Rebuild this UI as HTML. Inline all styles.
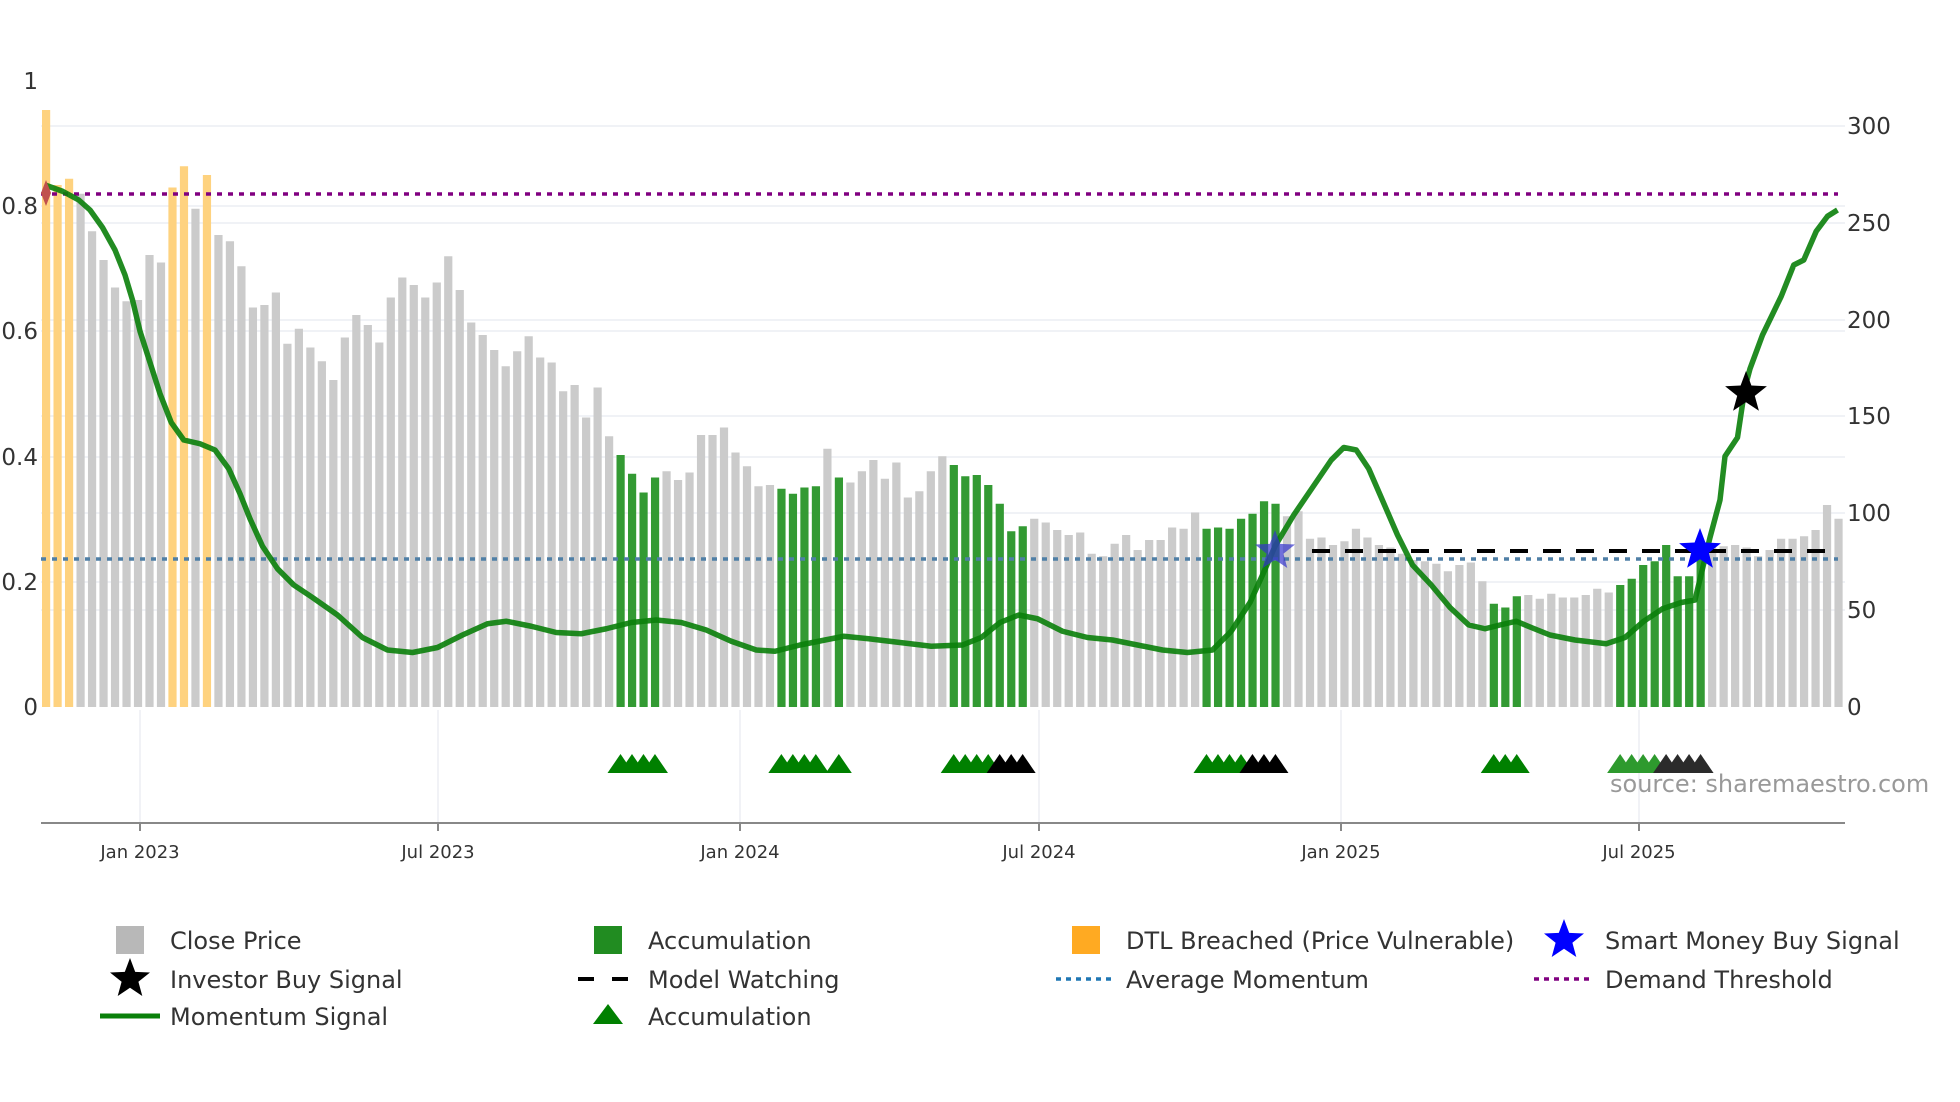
<!DOCTYPE html>
<html><head><meta charset="utf-8"><style>
html,body{margin:0;padding:0;background:#fff;width:1960px;height:1102px;overflow:hidden}
svg text{font-family:"DejaVu Sans","Liberation Sans",sans-serif}
</style></head><body>
<svg id="s" width="1960" height="1102" viewBox="0 0 1960 1102" xmlns="http://www.w3.org/2000/svg">
<g id="grid" stroke="#eceef3" stroke-width="1.5"></g>
<g id="bars"></g>
<g id="lines"></g>
<g id="tri"></g>
<g id="ax"></g>
<g id="leg"></g>
</svg>
<script>
var NS="http://www.w3.org/2000/svg";
function el(p,t,a,txt){var e=document.createElementNS(NS,t);for(var k in a)e.setAttribute(k,a[k]);if(txt!==undefined)e.textContent=txt;document.getElementById(p).appendChild(e);return e;}
var tops=[88,148,143,155,185,208,230,241,240,204,210,150,133,167,140,188,193,213,246,244,234,275,263,278,289,304,270,252,260,274,238,222,228,238,226,205,232,258,268,280,293,281,269,286,290,313,308,334,310,349,364,379,394,382,377,384,378,348,348,342,362,373,389,388,391,395,390,389,359,382,386,377,368,383,370,398,393,377,365,372,381,380,388,403,425,421,415,418,424,428,426,443,445,435,428,440,432,432,422,423,410,423,422,423,415,411,401,403,413,409,431,430,436,433,423,430,436,438,443,448,449,451,457,452,450,465,483,486,477,476,479,475,478,478,476,471,474,468,463,452,449,436,461,461,436,438,437,436,438,445,440,431,431,429,424,404,415];
var orange=[0,1,2,11,12,14];
var greens=[50,51,52,53,64,65,66,67,69,79,80,81,82,83,84,85,101,102,103,104,105,106,107,126,127,128,137,138,139,140,141,142,143,144];
function bx(i){return 46+i*11.49;}
[582,457,331,206,610,513,416,320,223,126].forEach(function(y){el('grid','line',{x1:41,x2:1845,y1:y,y2:y});});
[140,438,740,1039,1341,1639].forEach(function(x){el('grid','line',{x1:x,x2:x,y1:710,y2:823});});
tops.forEach(function(t,i){var y=t*1.25;var c='#cbcbcb';if(orange.indexOf(i)>=0)c='#fed27f';else if(greens.indexOf(i)>=0)c='#339a33';
el('bars','rect',{x:bx(i)-4,y:y,width:8.2,height:707-y,fill:c});});
el('lines','line',{x1:41,x2:1838,y1:194,y2:194,stroke:'#800080','stroke-width':3.5,'stroke-dasharray':'5 6'});
el('lines','line',{x1:41,x2:1838,y1:559,y2:559,stroke:'#4f7fa6','stroke-width':3.5,'stroke-dasharray':'5 6'});
el('lines','line',{x1:1312,x2:1834,y1:551,y2:551,stroke:'#000','stroke-width':4,'stroke-dasharray':'18 15'});
var pts=[[36,148],[50,153],[63,160],[72,168],[82,182],[92,200],[100,220],[106,240],[112,265],[120,290],[128,315],[137,338],[147,352],[160,355],[172,360],[183,375],[192,395],[200,415],[210,437],[222,455],[235,468],[250,478],[270,492],[290,510],[310,520],[330,522],[350,518],[370,508],[390,499],[405,497],[425,501],[445,506],[465,507],[485,503],[505,498],[525,496],[545,498],[565,504],[585,513],[605,520],[620,521],[640,516],[660,512],[675,509],[695,511],[720,514],[745,517],[770,516],[785,510],[800,498],[815,492],[830,495],[850,505],[870,510],[890,512],[910,516],[930,520],[950,522],[970,520],[985,505],[1000,482],[1010,460],[1020,437],[1035,412],[1050,390],[1065,368],[1075,358],[1085,360],[1095,375],[1105,398],[1118,428],[1130,452],[1145,468],[1160,486],[1175,500],[1188,503],[1200,500],[1213,497],[1225,502],[1240,508],[1260,512],[1285,515],[1300,510],[1315,497],[1330,487],[1345,482],[1356,480],[1362,455],[1368,430],[1376,400],[1380,365],[1390,350],[1396,310],[1400,295],[1410,268],[1425,237],[1435,212],[1443,208],[1453,185],[1462,173],[1470,168]];
el('lines','polyline',{points:pts.map(function(p){return (p[0]*1.25)+','+(p[1]*1.25);}).join(' '),fill:'none',stroke:'#0a800a','stroke-width':5.5,'stroke-linejoin':'round','stroke-opacity':0.9});
el('lines','path',{d:'M46,180 L51,193 L46,206 L41,193Z',fill:'#c0504d'});
function star(cx,cy,r,fill,op,g){var d='';for(var k=0;k<10;k++){var a=-Math.PI/2+k*Math.PI/5;var rr=k%2?r*0.42:r;d+=(k?'L':'M')+(cx+rr*Math.cos(a)).toFixed(1)+','+(cy+rr*Math.sin(a)).toFixed(1);}el(g||'lines','path',{d:d+'Z',fill:fill,'fill-opacity':op});}
star(1275,551,21,'#3333cc',0.7);
star(1700,550,22,'#0000ff',1);
star(1746,393,22,'#000',1);
function tri(i,c,op){var x=bx(i);el('tri','path',{d:'M'+(x-13)+',773 L'+x+',754 L'+(x+13)+',773Z',fill:c,'fill-opacity':op});}
[50,51,52,53,64,65,66,67,69,79,80,81,82,101,102,103,104,126,127,128].forEach(function(i){tri(i,'#008000',1);});
[83,84,85,105,106,107].forEach(function(i){tri(i,'#000',1);});
[137,138,139,140].forEach(function(i){tri(i,'#2e9a2e',1);});
[141,142,143,144].forEach(function(i){tri(i,'#2b2b2b',1);});
el('ax','line',{x1:41,x2:1845,y1:823,y2:823,stroke:'#888','stroke-width':2});
var dl=[[140,'Jan 2023'],[438,'Jul 2023'],[740,'Jan 2024'],[1039,'Jul 2024'],[1341,'Jan 2025'],[1639,'Jul 2025']];
dl.forEach(function(d){el('ax','line',{x1:d[0],x2:d[0],y1:823,y2:831,stroke:'#888','stroke-width':2});el('ax','text',{x:d[0],y:858,'text-anchor':'middle','font-size':18,fill:'#333'},d[1]);});
[[81,'1'],[206,'0.8'],[331,'0.6'],[457,'0.4'],[582,'0.2'],[707,'0']].forEach(function(d){el('ax','text',{x:38,y:d[0]+8,'text-anchor':'end','font-size':23,fill:'#333'},d[1]);});
[[126,'300'],[223,'250'],[320,'200'],[416,'150'],[513,'100'],[610,'50'],[707,'0']].forEach(function(d){el('ax','text',{x:1847,y:d[0]+8,'font-size':23,fill:'#333'},d[1]);});
el('ax','text',{x:1610,y:792,'font-size':24,fill:'#999'},'source: sharemaestro.com');
function lt(x,y,t){el('leg','text',{x:x,y:y+9,'font-size':24,fill:'#333'},t);}
el('leg','rect',{x:116,y:926,width:28,height:28,fill:'#b8b8b8'});lt(170,940,'Close Price');
star(130,979,21,'#000',1,'leg');lt(170,979,'Investor Buy Signal');
el('leg','line',{x1:100,x2:160,y1:1016,y2:1016,stroke:'#0a800a','stroke-width':5});lt(170,1016,'Momentum Signal');
el('leg','rect',{x:594,y:926,width:28,height:28,fill:'#218c21'});lt(648,940,'Accumulation');
el('leg','line',{x1:578,x2:634,y1:979,y2:979,stroke:'#000','stroke-width':4,'stroke-dasharray':'16 18'});lt(648,979,'Model Watching');
el('leg','path',{d:'M593,1024 L608,1004 L623,1024Z',fill:'#008000'});lt(648,1016,'Accumulation');
el('leg','rect',{x:1072,y:926,width:28,height:28,fill:'#ffaa22'});lt(1126,940,'DTL Breached (Price Vulnerable)');
el('leg','line',{x1:1056,x2:1114,y1:979,y2:979,stroke:'#1f77b4','stroke-width':3.5,'stroke-dasharray':'5 5'});lt(1126,979,'Average Momentum');
star(1564,940,21,'#0000ff',1,'leg');lt(1605,940,'Smart Money Buy Signal');
el('leg','line',{x1:1534,x2:1592,y1:979,y2:979,stroke:'#800080','stroke-width':3.5,'stroke-dasharray':'5 5'});lt(1605,979,'Demand Threshold');
</script>
</body></html>
